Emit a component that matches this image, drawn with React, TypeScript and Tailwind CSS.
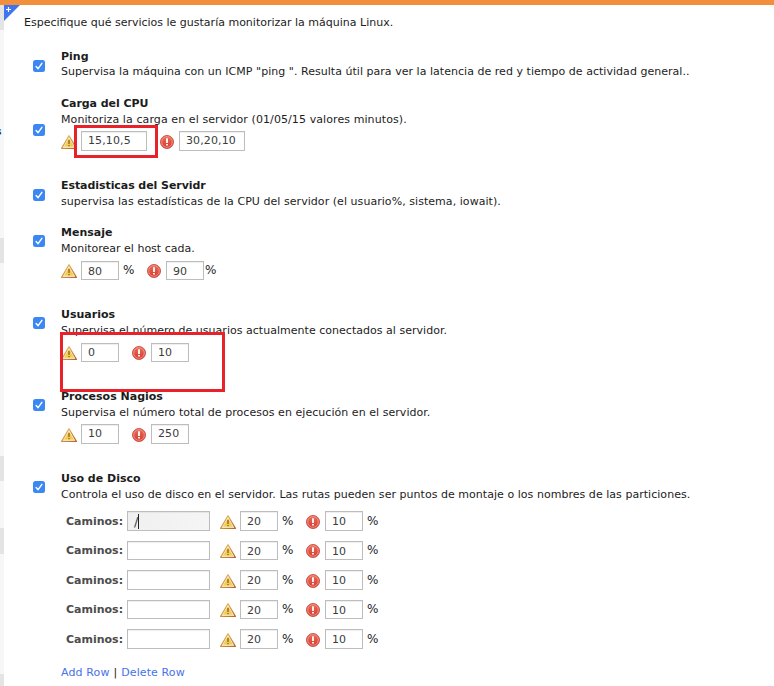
import type { ReactNode } from 'react';

function Warn({ className = '' }: { className?: string }) {
  return (
    <svg viewBox="0 0 16 14" className={`h-3.5 w-4 shrink-0 ${className}`}>
      <defs>
        <linearGradient id="wb" x1="0" y1="0" x2="1" y2="1">
          <stop offset="0" stopColor="#ecc65a" />
          <stop offset="1" stopColor="#b4642a" />
        </linearGradient>
        <linearGradient id="wf" x1="0" y1="0" x2="0" y2="1">
          <stop offset="0" stopColor="#eec66e" />
          <stop offset="1" stopColor="#efd04a" />
        </linearGradient>
      </defs>
      <path d="M8 .7 15.4 13.4H.6Z" fill="#fffdf3" stroke="url(#wb)" strokeWidth="1.2" strokeLinejoin="round" />
      <path d="M8 3 13.2 11.8H2.8Z" fill="url(#wf)" />
      <path d="M7 5h2v4H7zM7 10h2v1.2H7z" fill="#b5842a" />
    </svg>
  );
}

function Crit({ className = '' }: { className?: string }) {
  return (
    <svg viewBox="0 0 14 14" className={`h-3.5 w-3.5 shrink-0 ${className}`}>
      <defs>
        <linearGradient id="cf" x1="0" y1="0" x2="0" y2="1">
          <stop offset="0" stopColor="#e8705a" />
          <stop offset="1" stopColor="#d8392f" />
        </linearGradient>
      </defs>
      <circle cx="7" cy="7" r="6.5" fill="url(#cf)" stroke="#c9493f" strokeWidth=".9" />
      <circle cx="7" cy="7" r="5.3" fill="none" stroke="#f0a092" strokeWidth=".8" />
      <path d="M6.1 3.2h1.8v4.9H6.1zM6.1 9h1.8v1.6H6.1z" fill="#fff" />
    </svg>
  );
}

function Check({ className }: { className: string }) {
  return (
    <span className={`flex h-3 w-3 shrink-0 items-center justify-center rounded-[2.5px] bg-[#3b87f3] ${className}`}>
      <svg viewBox="0 0 12 12" className="h-3 w-3">
        <path d="M3.1 6.5 5.1 8.7 8.9 3.3" fill="none" stroke="#fff" strokeWidth="1.4" strokeLinecap="round" strokeLinejoin="round" />
      </svg>
    </span>
  );
}

function Field({ value, className }: { value: string; className: string }) {
  return (
    <span className={`flex shrink-0 items-center border border-[#bdbdbd] bg-white pl-1.5 pt-px tracking-[0.12px] text-[#3c3c3c] shadow-[inset_0_1px_1px_#eeeeee] ${className}`}>
      {value}
    </span>
  );
}

type SectionProps = {
  title: string;
  text: string;
  height: string;
  check: string;
  titleSpacing?: string;
  titleHeight?: string;
  textSpacing?: string;
  children?: ReactNode;
};

function Section({ title, text, height, check, titleSpacing = '', titleHeight = 'h-4', textSpacing = '', children }: SectionProps) {
  return (
    <section className={`flex pl-[29px] ${height}`}>
      <Check className={check} />
      <div className="ml-4 whitespace-nowrap pt-px">
        <h2 className={`font-bold leading-4 ${titleHeight} ${titleSpacing}`}>{title}</h2>
        <p className={`h-4 leading-4 ${textSpacing}`}>{text}</p>
        {children}
      </div>
    </section>
  );
}

const diskRows = [
  { path: '/', height: 'h-[30px]', box: 'h-5', line: 'leading-[21px]' },
  { path: '', height: 'h-[29px]', box: 'h-[19px]', line: 'leading-[19px]' },
  { path: '', height: 'h-[30px]', box: 'h-5', line: 'leading-[21px]' },
  { path: '', height: 'h-[29px]', box: 'h-[19px]', line: 'leading-[19px]' },
  { path: '', height: 'h-[30px]', box: 'h-5', line: 'leading-[21px]' },
];

export default function App() {
  return (
    <div className="relative h-[686px] w-[774px] overflow-hidden bg-white font-['DejaVu_Sans',Verdana,sans-serif] text-[11px] text-[#1c1c1c]">
      <div className="h-[5px] bg-[#f18f3d]" />
      <div className="flex h-[681px]">
        <aside className="flex w-1 shrink-0 flex-col bg-[#f7f7f7]">
          <div className="h-[25px] bg-[#e4e4e4]" />
          <div className="mt-[208px] h-[25px] bg-[#e4e4e4]" />
          <div className="mt-[193px] h-[25px] bg-[#e4e4e4]" />
          <div className="mt-[47px] h-[26px] bg-[#e4e4e4]" />
          <div className="mt-[120px] h-3 bg-[#e4e4e4]" />
        </aside>
        <main className="flex-1">
          <p className="h-[43px] whitespace-nowrap pl-5 pt-[10px] leading-4">
            Especifique qué servicios le gustaría monitorizar la máquina Linux.
          </p>
          <Section title="Ping" titleHeight="h-[15px]" height="h-[47px]" check="mt-3" textSpacing="tracking-[0.033px]"
            text={'Supervisa la máquina con un ICMP "ping ". Resulta útil para ver la latencia de red y tiempo de actividad general..'} />
          <Section title="Carga del CPU" height="h-[82px]" check="mt-[29px]" titleSpacing="tracking-[-0.06px]" textSpacing="tracking-[0.09px]"
            text="Monitoriza la carga en el servidor (01/05/15 valores minutos).">
            <div className="mt-[3px] flex">
              <Warn className="mt-1" />
              <Field value="15,10,5" className="ml-1 h-5 w-[66px]" />
              <Crit className="ml-[13px] mt-1" />
              <Field value="30,20,10" className="ml-[5px] h-5 w-[66px]" />
            </div>
          </Section>
          <Section title="Estadisticas del Servidr" height="h-[47px]" check="mt-3" titleSpacing="tracking-[-0.07px]" textSpacing="tracking-[0.05px]"
            text="supervisa las estadísticas de la CPU del servidor (el usuario%, sistema, iowait)." />
          <Section title="Mensaje" height="h-[82px]" check="mt-[11px]" text="Monitorear el host cada.">
            <div className="mt-1 flex leading-[19px]">
              <Warn className="mt-[3px]" />
              <Field value="80" className="ml-1 h-[19px] w-[38px]" />
              <span className="ml-1 w-[11px] text-[12px]">%</span>
              <Crit className="ml-[13px] mt-[3px]" />
              <Field value="90" className="ml-[5px] h-[19px] w-[38px]" />
              <span className="ml-px text-[12px]">%</span>
            </div>
          </Section>
          <Section title="Usuarios" height="h-[82px]" check="mt-[11px]" textSpacing="tracking-[0.025px]"
            text="Supervisa el número de usuarios actualmente conectados al servidor.">
            <div className="mt-1 flex">
              <Warn className="mt-[3px]" />
              <Field value="0" className="ml-1 h-[19px] w-[38px]" />
              <Crit className="ml-[13px] mt-[3px]" />
              <Field value="10" className="ml-[5px] h-[19px] w-[38px]" />
            </div>
          </Section>
          <Section title="Procesos Nagios" height="h-[82px]" check="mt-[11px]" textSpacing="tracking-[0.045px]"
            text="Supervisa el número total de procesos en ejecución en el servidor.">
            <div className="mt-[3px] flex">
              <Warn className="mt-1" />
              <Field value="10" className="ml-1 h-5 w-[38px]" />
              <Crit className="ml-[13px] mt-1" />
              <Field value="250" className="ml-[5px] h-5 w-[38px]" />
            </div>
          </Section>
          <Section title="Uso de Disco" height="h-[194px]" check="mt-[11px]" textSpacing="tracking-[0.037px]"
            text="Controla el uso de disco en el servidor. Las rutas pueden ser puntos de montaje o los nombres de las particiones.">
            <div className="mt-2 pl-[5px]">
              {diskRows.map((row, i) => (
                <div key={i} className={`flex ${row.line} ${row.height}`}>
                  <b className="w-[61px] text-[#4c4c4c]">Caminos:</b>
                  {row.path ? (
                    <span className="flex h-5 w-[83px] items-center border border-[#bdbdbd] bg-gradient-to-r from-[#f0f0f0] to-[#f5f5f5] pl-1.5 text-[#3c3c3c] shadow-[inset_0_1px_1px_#e4e4e4]">
                      <span className="text-[13px]">{row.path}</span>
                      <i className="h-[15px] w-px bg-[#222]" />
                    </span>
                  ) : (
                    <Field value="" className={`w-[83px] ${row.box}`} />
                  )}
                  <Warn className={`ml-2.5 ${i % 2 ? 'mt-[3px]' : 'mt-1'}`} />
                  <Field value="20" className={`ml-1 w-[38px] ${row.box}`} />
                  <span className="ml-1 w-[11px] text-[12px]">%</span>
                  <Crit className={`ml-[13px] ${i % 2 ? 'mt-[3px]' : 'mt-1'}`} />
                  <Field value="10" className={`ml-[5px] w-[38px] ${row.box}`} />
                  <span className="ml-1 text-[12px]">%</span>
                </div>
              ))}
            </div>
          </Section>
          <nav className="flex gap-1 whitespace-nowrap pl-[57px] pt-px leading-4">
            <a className="tracking-[0.12px] text-[#4573e8]">Add Row</a>
            <span>|</span>
            <a className="tracking-[0.1px] text-[#4573e8]">Delete Row</a>
          </nav>
        </main>
      </div>
      <svg viewBox="0 0 16 16" className="absolute left-1 top-[5px] h-4 w-4">
        <path d="M0 0H16L0 16Z" fill="#4073f0" />
        <path d="M4.5 2v5M2 4.5h5" stroke="#fff" strokeWidth="1.2" />
      </svg>
      <span className="absolute -left-[5px] top-[124px] font-bold leading-4 text-[#173a70]">s</span>
      <div className="absolute left-[74px] top-[125px] h-[33px] w-[84px] border-[3px] border-[#e9222a]" />
      <div className="absolute left-[60px] top-[332px] h-[60px] w-[165px] border-[3px] border-[#e9222a]" />
    </div>
  );
}
